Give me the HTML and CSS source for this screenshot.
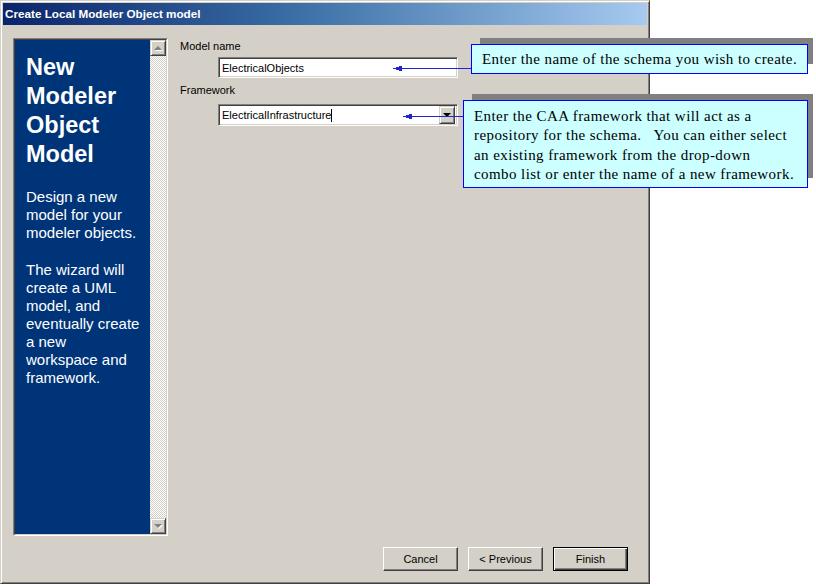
FILE: index.html
```html
<!DOCTYPE html>
<html>
<head>
<meta charset="utf-8">
<title>Create Local Modeler Object model</title>
<link rel="stylesheet" href="styles.css">
</head>
<body>
<div class="stage">
  <div class="window">
    <div class="titlebar">Create Local Modeler Object model</div>
    <div class="main">
      <div class="sidepanel">
        <div class="sideinner">
          <div class="sidetext">
            <h1 class="side-title">New<br>Modeler<br>Object<br>Model</h1>
            <p class="side-para">Design a new<br>model for your<br>modeler objects.</p>
            <p class="side-para">The wizard will<br>create a UML<br>model, and<br>eventually create<br>a new<br>workspace and<br>framework.</p>
          </div>
          <div class="scrollbar">
            <div class="sbtn"><span class="tri up"></span></div>
            <div class="track"></div>
            <div class="sbtn"><span class="tri down"></span></div>
          </div>
        </div>
      </div>
      <div class="form">
        <div class="lbl first">Model name</div>
        <div class="field name">ElectricalObjects</div>
        <div class="lbl second">Framework</div>
        <div class="field combo">
          <span class="val">ElectricalInfrastructure<span class="caret"></span></span>
          <span class="dropbtn"><span class="tri down black"></span></span>
        </div>
      </div>
    </div>
    <div class="buttons">
      <button class="btn">Cancel</button>
      <button class="btn">&lt; Previous</button>
      <button class="btn default">Finish</button>
    </div>
  </div>

  <svg class="connectors" width="816" height="586" viewBox="0 0 816 586">
    <line x1="400" y1="68.5" x2="471" y2="68.5" stroke="#2323d6" stroke-width="1"/>
    <polygon points="393,68.5 402,65.5 402,71.5" fill="#2323d6"/>
    <line x1="410" y1="116.5" x2="463" y2="116.5" stroke="#2323d6" stroke-width="1"/>
    <polygon points="403,116.5 412,113.5 412,119.5" fill="#2323d6"/>
  </svg>

  <div class="callout c1">Enter the name of the schema you wish to create.</div>
  <div class="callout c2">Enter the CAA framework that will act as a<br>repository for the schema.&nbsp;&nbsp; You can either select<br>an existing framework from the drop-down<br>combo list or enter the name of a new framework.</div>
</div>
</body>
</html>
```

FILE: styles.css
```css
* { box-sizing: border-box; }

html, body {
  margin: 0;
  padding: 0;
  background: #ffffff;
}

.stage {
  position: relative;
  width: 816px;
  height: 586px;
  overflow: hidden;
  font-family: "Liberation Sans", Arial, sans-serif;
}

.window {
  width: 650px;
  height: 584px;
  background: #d4d0c8;
  border: 1px solid;
  border-color: #d4d0c8 #404040 #404040 #d4d0c8;
  box-shadow: inset 1px 1px #ffffff, inset -1px -1px #808080;
  padding: 2px;
  display: flex;
  flex-direction: column;
}

.titlebar {
  height: 22px;
  line-height: 22px;
  padding-left: 2px;
  background: linear-gradient(90deg, #0a246a 0%, #3a6ea5 45%, #a6caf0 100%);
  color: #ffffff;
  font-weight: bold;
  font-size: 11.7px;
  white-space: nowrap;
}

.main {
  display: flex;
  padding: 13px 0 0 10px;
}

.sidepanel {
  width: 155px;
  height: 498px;
  border: 1px solid;
  border-color: #808080 #ffffff #ffffff #808080;
}

.sideinner {
  height: 100%;
  display: flex;
  border: 1px solid;
  border-color: #404040 #d4d0c8 #d4d0c8 #404040;
}

.sidetext {
  flex: 1;
  background: #003479;
  color: #ffffff;
  padding: 13px 0 0 11px;
}

.side-title {
  margin: 0;
  font-size: 23.5px;
  font-weight: bold;
  line-height: 29px;
}

.side-para {
  margin: 19px 0 0 0;
  font-size: 15px;
  line-height: 18px;
  white-space: nowrap;
}

.scrollbar {
  width: 16px;
  display: flex;
  flex-direction: column;
}

.track {
  flex: 1;
  background: repeating-conic-gradient(#ffffff 0 25%, #d4d0c8 0 50%) 0 0 / 2px 2px;
}

.sbtn {
  width: 16px;
  height: 16px;
  background: #d4d0c8;
  border: 1px solid;
  border-color: #d4d0c8 #404040 #404040 #d4d0c8;
  box-shadow: inset 1px 1px #ffffff, inset -1px -1px #808080;
  display: flex;
  align-items: center;
  justify-content: center;
}

.tri {
  width: 0;
  height: 0;
  border-left: 4px solid transparent;
  border-right: 4px solid transparent;
  filter: drop-shadow(1px 1px 0 #ffffff);
}

.tri.up { border-bottom: 4px solid #808080; }
.tri.down { border-top: 4px solid #808080; }
.tri.down.black { border-top-color: #000000; filter: none; }

.form {
  margin-left: 12px;
  font-size: 11px;
  color: #000000;
}

.lbl {
  line-height: 14px;
  height: 14px;
  white-space: nowrap;
}

.lbl.first { margin-top: 1px; }
.lbl.second { margin-top: 5px; }

.field {
  margin-left: 38px;
  width: 240px;
  background: #ffffff;
  border: 1px solid;
  border-color: #808080 #ffffff #ffffff #808080;
  box-shadow: inset 1px 1px #404040, inset -1px -1px #d4d0c8;
  padding-left: 3px;
  display: flex;
  align-items: center;
  white-space: nowrap;
}

.field.name {
  margin-top: 4px;
  height: 21px;
}

.field.combo {
  margin-top: 7px;
  height: 22px;
  padding-right: 2px;
  justify-content: space-between;
}

.val {
  display: flex;
  align-items: center;
}

.caret {
  display: inline-block;
  width: 1px;
  height: 13px;
  background: #000000;
}

.dropbtn {
  width: 16px;
  height: 18px;
  background: #d4d0c8;
  border: 1px solid;
  border-color: #d4d0c8 #404040 #404040 #d4d0c8;
  box-shadow: inset 1px 1px #ffffff, inset -1px -1px #808080;
  display: flex;
  align-items: center;
  justify-content: center;
}

.buttons {
  margin-top: auto;
  display: flex;
  justify-content: flex-end;
  gap: 10px;
  padding: 0 19px 10px 0;
}

.btn {
  width: 75px;
  height: 24px;
  padding: 0;
  background: #d4d0c8;
  font-family: "Liberation Sans", Arial, sans-serif;
  font-size: 11px;
  color: #000000;
  border: 1px solid;
  border-color: #ffffff #404040 #404040 #ffffff;
  box-shadow: inset -1px -1px #808080;
}

.btn.default {
  border: 1px solid #000000;
  box-shadow: inset 1px 1px #ffffff, inset -1px -1px #404040, inset -2px -2px #808080;
}

.connectors {
  position: absolute;
  left: 0;
  top: 0;
  shape-rendering: crispEdges;
  pointer-events: none;
}

.callout {
  position: absolute;
  background: #ccffff;
  border: 1px solid #0000ff;
  box-shadow: 7px -8px 0 -2px #808080;
  font-family: "Liberation Serif", "Times New Roman", serif;
  font-size: 15px;
  letter-spacing: 0.42px;
  color: #000000;
  white-space: nowrap;
}

.c1 {
  left: 471px;
  top: 44px;
  width: 337px;
  height: 30px;
  line-height: 28px;
  padding-left: 10px;
}

.c2 {
  left: 463px;
  top: 100px;
  width: 345px;
  height: 88px;
  line-height: 19.4px;
  padding: 6px 0 0 10px;
}
```
